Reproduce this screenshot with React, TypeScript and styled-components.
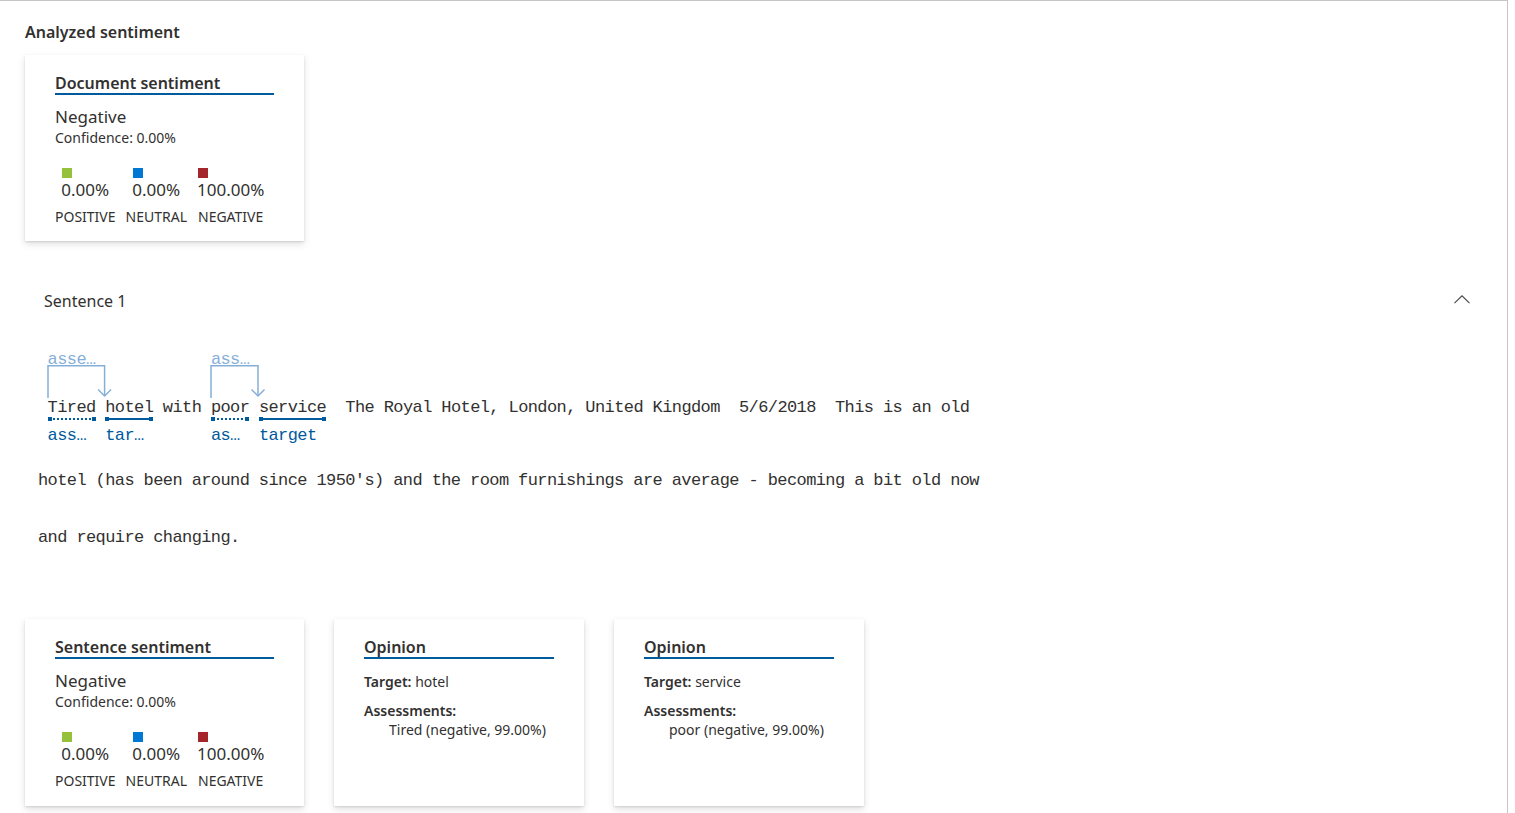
import React from "react";
import styled, { createGlobalStyle, css } from "styled-components";

const GlobalStyle = createGlobalStyle`
  html, body { margin: 0; padding: 0; background: #ffffff; }
  body { font-family: "Noto Sans", "Open Sans", sans-serif; color: #323130; }
  * { box-sizing: border-box; }
`;

const Page = styled.div`
  width: 1508px;
  height: 813px;
  border-top: 1px solid #c8c6c4;
  border-right: 1px solid #c8c6c4;
  padding: 20px 25px 0 25px;
  overflow: hidden;
`;

const Heading = styled.h2`
  margin: 0;
  font-size: 16px;
  font-weight: 600;
  line-height: 22px;
  color: #323130;
`;

const Card = styled.section<{ $width: number }>`
  width: ${(p) => p.$width}px;
  background: #ffffff;
  padding: 18px 30px 15px;
  box-shadow: 0 3.2px 7.2px rgba(0, 0, 0, 0.13), 0 0.6px 1.8px rgba(0, 0, 0, 0.11);
`;

const DocCard = styled(Card)`
  margin-top: 12px;
`;

const CardTitle = styled.div`
  font-size: 16px;
  font-weight: 600;
  line-height: 20px;
  color: #323130;
  border-bottom: 2px solid #005a9e;
`;

const Verdict = styled.div`
  margin-top: 11px;
  font-size: 17px;
  line-height: 22px;
`;

const Confidence = styled.div`
  font-size: 14px;
  line-height: 19px;
`;

const Breakdown = styled.div`
  display: flex;
  gap: 10px;
  margin-top: 21px;
`;

const Column = styled.div`
  display: flex;
  flex-direction: column;
  align-items: center;
`;

const Figure = styled.div`
  display: flex;
  flex-direction: column;
  align-items: flex-start;
`;

const Swatch = styled.span<{ $color: string }>`
  width: 10px;
  height: 10px;
  margin-left: 1px;
  background: ${(p) => p.$color};
`;

const Value = styled.span`
  margin-top: 1px;
  font-size: 17px;
  line-height: 22px;
`;

const Label = styled.span`
  margin-top: 6px;
  font-size: 14px;
  line-height: 19px;
`;

const Section = styled.div`
  margin-top: 49px;
`;

const SectionHeader = styled.div`
  display: flex;
  justify-content: space-between;
  align-items: flex-start;
  padding: 0 12px 0 19px;
  font-size: 16px;
  line-height: 22px;
`;

const Chevron = styled.svg`
  margin-top: 5px;
  display: block;
`;

const TextBlock = styled.div`
  margin-left: 13px;
  font-family: "Liberation Mono", "DejaVu Sans Mono", monospace;
  font-size: 17px;
  letter-spacing: -0.6px;
  color: #323130;
`;

const TokenRow = styled.div`
  display: flex;
  align-items: flex-start;
  margin-top: 38px;
`;

const TokenCol = styled.div`
  display: flex;
  flex-direction: column;
  white-space: pre;
`;

const TopSlot = styled.div`
  position: relative;
  height: 49px;
  padding-top: 1px;
  line-height: 18px;
  color: #86afd8;
`;

const Connector = styled.svg`
  position: absolute;
  left: -1px;
  top: 15px;
  overflow: visible;
`;

const Word = styled.div`
  height: 18px;
  line-height: 18px;
`;

const Mark = styled.div<{ $kind?: "assessment" | "target" }>`
  position: relative;
  height: 4px;
  ${(p) =>
    p.$kind &&
    css`
      background: linear-gradient(#005a9e, #005a9e) left center / 4px 4px no-repeat,
        linear-gradient(#005a9e, #005a9e) right center / 4px 4px no-repeat;
      &::before {
        content: "";
        position: absolute;
        left: 2px;
        right: 2px;
        top: 1px;
        border-top: 2px ${p.$kind === "assessment" ? "dotted" : "solid"} #005a9e;
      }
    `}
`;

const Below = styled.div`
  margin-top: 6px;
  height: 18px;
  line-height: 18px;
  color: #005a9e;
`;

const PlainLine = styled.div`
  line-height: 57px;
  white-space: pre;
`;

const FirstPlain = styled(PlainLine)`
  margin-top: 7px;
`;

const CardRow = styled.div`
  display: flex;
  gap: 30px;
  align-items: stretch;
  height: 187px;
  margin-top: 53px;
`;

const Field = styled.div<{ $gap: number; $indent?: number }>`
  margin-top: ${(p) => p.$gap}px;
  padding-left: ${(p) => p.$indent ?? 0}px;
  font-size: 14px;
  line-height: 19px;
`;

const Strong = styled.span`
  font-weight: 600;
`;

type Token = {
  text: string;
  kind?: "assessment" | "target";
  below?: string;
  above?: string;
  arrow?: number;
};

const CH = 9.6;

const tokens: Token[] = [
  { text: " " },
  { text: "Tired", kind: "assessment", below: "ass…", above: "asse…", arrow: 6 },
  { text: " " },
  { text: "hotel", kind: "target", below: "tar…" },
  { text: " with " },
  { text: "poor", kind: "assessment", below: "as…", above: "ass…", arrow: 5 },
  { text: " " },
  { text: "service", kind: "target", below: "target" },
  { text: "  The Royal Hotel, London, United Kingdom  5/6/2018  This is an old" },
];

const sentiments = [
  { color: "#95c13d", value: "0.00%", label: "POSITIVE" },
  { color: "#0078d4", value: "0.00%", label: "NEUTRAL" },
  { color: "#a4262c", value: "100.00%", label: "NEGATIVE" },
];

function SentimentCard({ title }: { title: string }) {
  return (
    <>
      <CardTitle>{title}</CardTitle>
      <Verdict>Negative</Verdict>
      <Confidence>Confidence: 0.00%</Confidence>
      <Breakdown>
        {sentiments.map((s) => (
          <Column key={s.label}>
            <Figure>
              <Swatch $color={s.color} />
              <Value>{s.value}</Value>
            </Figure>
            <Label>{s.label}</Label>
          </Column>
        ))}
      </Breakdown>
    </>
  );
}

function ArrowConnector({ chars }: { chars: number }) {
  const d = chars * CH;
  return (
    <Connector width={d + 8} height={33} viewBox={`0 0 ${d + 8} 33`}>
      <path
        d={`M1 33 V0.75 H${d} V31`}
        fill="none"
        stroke="#86afd8"
        strokeWidth="1.5"
      />
      <path
        d={`M${d - 6.5} 24.5 L${d} 31 L${d + 6.5} 24.5`}
        fill="none"
        stroke="#86afd8"
        strokeWidth="1.5"
      />
    </Connector>
  );
}

function Opinion({ target, assessment }: { target: string; assessment: string }) {
  return (
    <Card $width={250}>
      <CardTitle>Opinion</CardTitle>
      <Field $gap={13}>
        <Strong>Target:</Strong> {target}
      </Field>
      <Field $gap={10}>
        <Strong>Assessments:</Strong>
      </Field>
      <Field $gap={0} $indent={25}>
        {assessment}
      </Field>
    </Card>
  );
}

export default function App() {
  return (
    <>
      <GlobalStyle />
      <Page>
        <Heading>Analyzed sentiment</Heading>
        <DocCard $width={279}>
          <SentimentCard title="Document sentiment" />
        </DocCard>

        <Section>
          <SectionHeader>
            <span>Sentence 1</span>
            <Chevron width="16" height="9" viewBox="0 0 16 9">
              <path d="M0.5 8.2 L8 0.8 L15.5 8.2" fill="none" stroke="#484644" strokeWidth="1.1" />
            </Chevron>
          </SectionHeader>

          <TextBlock>
            <TokenRow>
              {tokens.map((t, i) => (
                <TokenCol key={i}>
                  <TopSlot>
                    {t.above}
                    {t.arrow ? <ArrowConnector chars={t.arrow} /> : null}
                  </TopSlot>
                  <Word>{t.text}</Word>
                  <Mark $kind={t.kind} />
                  <Below>{t.below ?? ""}</Below>
                </TokenCol>
              ))}
            </TokenRow>
            <FirstPlain>hotel (has been around since 1950's) and the room furnishings are average - becoming a bit old now</FirstPlain>
            <PlainLine>and require changing.</PlainLine>
          </TextBlock>
        </Section>

        <CardRow>
          <Card $width={279}>
            <SentimentCard title="Sentence sentiment" />
          </Card>
          <Opinion target="hotel" assessment="Tired (negative, 99.00%)" />
          <Opinion target="service" assessment="poor (negative, 99.00%)" />
        </CardRow>
      </Page>
    </>
  );
}
